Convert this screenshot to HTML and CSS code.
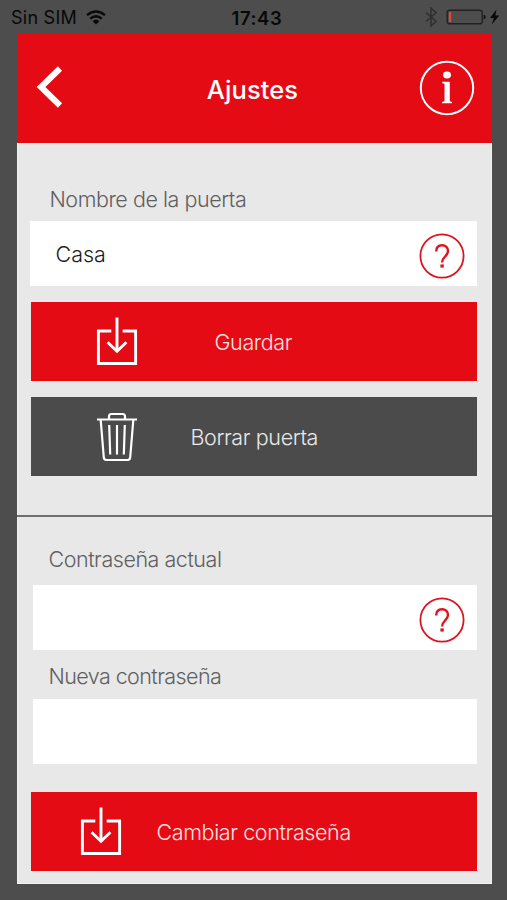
FILE: index.html
```
<!DOCTYPE html>
<html lang="es">
<head>
<meta charset="utf-8">
<title>Ajustes</title>
<link rel="stylesheet" href="styles.css">
</head>
<body>
<svg class="defs" width="0" height="0">
  <symbol id="save" viewBox="0 0 42 50">
    <path d="M15.300 15H2.400v32.500h37.200V15H26.700" fill="none" stroke="currentColor" stroke-width="2.900"/>
    <path d="M21 1.500v33M11.600 26.200l9.400 9 9.400-9" fill="none" stroke="currentColor" stroke-width="2.900"/>
  </symbol>
  <symbol id="help" viewBox="0 0 46 46">
    <circle cx="23" cy="23" r="21.600" fill="none" stroke="currentColor" stroke-width="1.800"/>
    <path d="M17.200 18.600c0-4 2.300-6.300 5.900-6.300s5.900 2.400 5.900 5.700c0 2.900-1.500 4.200-3.300 6-2 1.900-2.600 2.700-2.600 5.400" fill="none" stroke="currentColor" stroke-width="2.400"/>
    <path d="M21.400 31.400h3.400v3.200h-3.400z" fill="currentColor"/>
  </symbol>
</svg>
<div class="status">
  <div class="carrier"><span>Sin SIM</span>
    <svg width="20" height="16" viewBox="0 0 20 16" fill="none" stroke="#080808" stroke-width="2.300"><path d="M1 5.200Q10-2.300 19 5.200M4.300 8.600Q10 3.800 15.700 8.600"/><path d="M6.600 11.200Q10 8.300 13.400 11.200L10 14.500z" fill="#080808" stroke="none"/></svg>
  </div>
  <div class="time">17:43</div>
  <div class="power">
    <svg width="78" height="20" viewBox="0 0 78 20">
      <path d="M2 5.500l10 8.700L7 19V1l5 4.700L2 14.500" fill="none" stroke="#2f2f2f" stroke-width="1.500"/>
      <rect x="23.200" y="3.200" width="35" height="13.600" rx="2.400" fill="none" stroke="#222" stroke-width="1.400"/>
      <path d="M25 5h2.200v10H25z" fill="#e44537"/>
      <path d="M59.500 7.500q2.300.5 2.300 2.500t-2.300 2.500z" fill="#181818"/>
      <path d="M72.500 2.500L66 11h3.900L67.700 17.500l7.600-9H71.300z" fill="#080808"/>
    </svg>
  </div>
</div>
<main class="panel">
  <header class="header">
    <svg class="back" width="28" height="44" viewBox="0 0 28 44"><path d="M24 3.500L5 22l19 18.500" fill="none" stroke="#fff" stroke-width="6"/></svg>
    <h1>Ajustes</h1>
    <svg width="56" height="56" viewBox="0 0 56 56"><circle cx="28" cy="28" r="26.200" fill="none" stroke="#fff" stroke-width="2"/><ellipse cx="28" cy="15" rx="4" ry="3.400" fill="#fff"/><path d="M23.200 21.800h7.600v19.500l2.200.6v1.400H23v-1.400l2.500-.6V23.800L23.200 23.200z" fill="#fff"/></svg>
  </header>
  <section class="door">
    <label>Nombre de la puerta</label>
    <div class="field"><span>Casa</span><svg class="help" width="46" height="46"><use href="#help"/></svg></div>
    <div class="button save"><svg width="42" height="50"><use href="#save"/></svg><span>Guardar</span></div>
    <div class="button remove">
      <svg width="42" height="50" viewBox="0 0 42 50" fill="none" stroke="currentColor" stroke-width="2.200"><path d="M1 8.500h40M13 8V5.500q0-2.500 2.500-2.500h11q2.500 0 2.500 2.500V8M4.700 9l3.100 37.500q.3 2.500 2.700 2.500h21q2.400 0 2.700-2.500L37.300 9M13.200 14l1 29.500M21 14v29.500M28.800 14l-1 29.500"/></svg>
      <span>Borrar puerta</span>
    </div>
  </section>
  <section class="password">
    <label>Contraseña actual</label>
    <div class="field"><svg class="help" width="46" height="46"><use href="#help"/></svg></div>
    <label class="new">Nueva contraseña</label>
    <div class="field"></div>
    <div class="button change"><svg width="42" height="50"><use href="#save"/></svg><span>Cambiar contraseña</span></div>
  </section>
</main>
</body>
</html>
```
FILE: styles.css
```
* { box-sizing: border-box; }
body { margin: 0; height: 900px; overflow: hidden; background: #4d4d4d; font-family: Inter, "Liberation Sans", sans-serif; font-weight: 300; font-size: 21.5px; }
svg { display: block; flex: none; }
.defs { position: absolute; }
.status { height: 33px; padding: 0 5px 0 11px; display: grid; grid-template-columns: 1fr auto 1fr; align-items: center; font-size: 18px; font-weight: 400; color: #080808; }
.carrier { display: flex; align-items: center; gap: 9px; padding-top: 2px; letter-spacing: .25px; }
.time { font-weight: 600; font-size: 18.5px; padding: 2px 0 0 1px; letter-spacing: .6px; }
.power { justify-self: end; }
.panel { width: 475px; height: 851px; margin-left: 16.500px; background: #e8e8e8; border: 1px solid #f1f1f1; border-top: 0; }
.header { height: 110px; margin: 0 -1px; padding: 0 16.5px 0 19px; display: flex; align-items: center; justify-content: space-between; background: #e50b14; color: #fff; }
.back { margin-top: -3px; }
h1 { margin: 4px 0 0 22.5px; font-size: 25.5px; line-height: 32px; font-weight: 500; letter-spacing: .1px; }
.door { height: 374px; border-bottom: 2px solid #6e706e; margin: 0 -1px; padding: 42px 15px 0 14px; }
.password { margin: 0 -1px; padding: 28px 15px 0 16px; }
label { display: block; height: 28px; line-height: 28px; margin-left: 19px; color: #606060; white-space: nowrap; letter-spacing: -.46px; }
.password label { margin-left: 16px; }
.password .new { margin-top: 12px; letter-spacing: -.58px; }
.field { height: 65px; background: #fff; padding: 2px 12px 0 26px; display: flex; align-items: center; color: #1c1c1c; }
.door .field { margin-top: 8px; margin-left: -1px; }
.password .field { margin-top: 12px; }
.password .new + .field { margin-top: 9px; }
.field span { margin-top: -2px; }
.help { color: #dc1420; margin-left: auto; margin-top: 3px; }
.button { height: 79px; display: flex; align-items: center; background: #e50b14; color: #fff; white-space: nowrap; letter-spacing: -.38px; }
.button svg { margin-top: -2px; }
.button span { opacity: .88; }
.save { margin-top: 16px; padding-left: 65px; gap: 77px; }
.remove { margin-top: 16px; padding-left: 65px; gap: 53px; background: #4b4b4b; }
.change { margin-top: 28px; margin-left: -2px; padding-left: 49px; gap: 35px; }
```
